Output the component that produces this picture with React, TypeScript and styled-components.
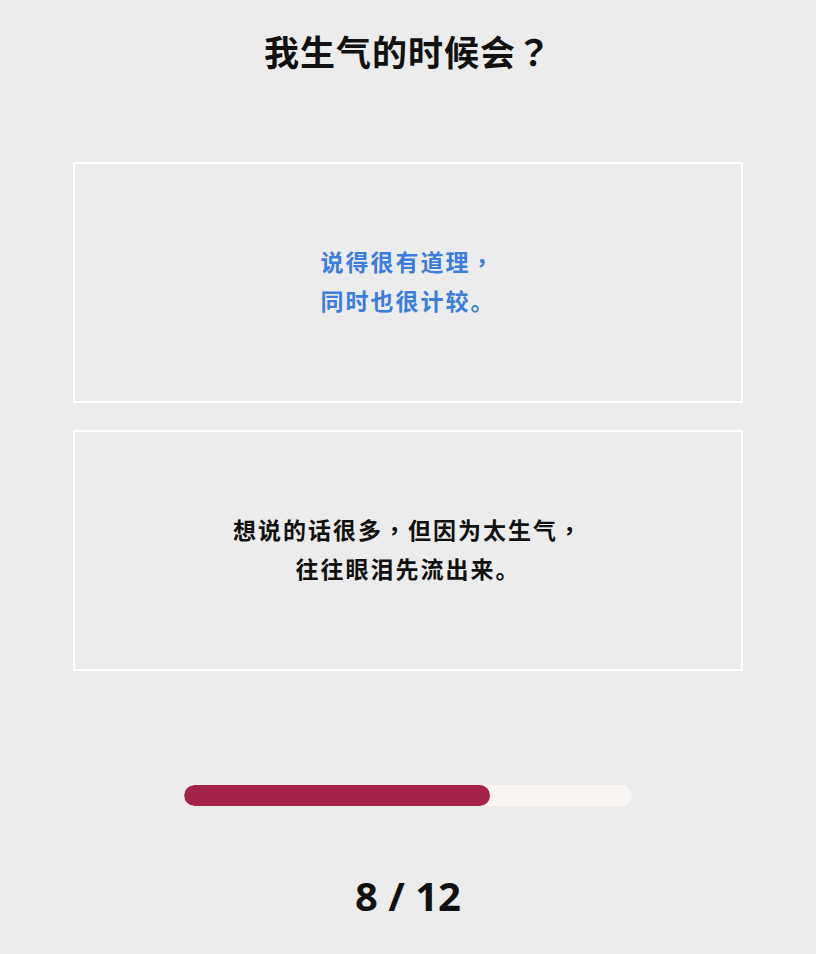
import React from "react";
import styled, { createGlobalStyle } from "styled-components";

const Global = createGlobalStyle`
  html, body { margin: 0; padding: 0; background: #ececec; }
  body {
    font-family: "Noto Sans CJK SC", "Noto Sans", sans-serif;
    text-spacing-trim: space-all;
  }
`;

const Page = styled.div`
  width: 816px;
  height: 954px;
  background: #ececec;
  display: flex;
  flex-direction: column;
  align-items: center;
  box-sizing: border-box;
  padding-top: 26px;
`;

const Title = styled.h1`
  margin: 0;
  font-size: 35px;
  line-height: 50px;
  font-weight: 700;
  color: #111;
  letter-spacing: 1px;
  text-spacing-trim: space-all;
`;

const Options = styled.div`
  margin-top: 86px;
  display: flex;
  flex-direction: column;
  gap: 27px;
  width: 670px;
`;

const Card = styled.button<{ $active?: boolean }>`
  box-sizing: border-box;
  height: 241px;
  width: 100%;
  border: 2px solid #ffffff;
  background: transparent;
  display: flex;
  align-items: center;
  justify-content: center;
  text-align: center;
  font-family: inherit;
  font-size: 23px;
  line-height: 39px;
  font-weight: 700;
  letter-spacing: 2px;
  text-spacing-trim: space-all;
  color: ${(p) => (p.$active ? "#3b7ddd" : "#111")};
  cursor: pointer;
  padding: 0 0 4px 0;
`;

const Punct = styled.span`
  font-family: "Noto Sans CJK TC", "Noto Sans CJK SC", sans-serif;
`;

const Progress = styled.div`
  margin-top: 114px;
  width: 448px;
  height: 21px;
  border-radius: 11px;
  background: #f8f5f2;
  overflow: hidden;
`;

const Fill = styled.div`
  height: 100%;
  border-radius: 11px;
  background: #a52348;
`;

const Counter = styled.div`
  margin-top: 63px;
  font-family: "Open Sans", "Noto Sans", sans-serif;
  font-size: 40px;
  font-weight: 700;
  line-height: 54px;
  color: #111;
`;

export default function App() {
  const current = 8;
  const total = 12;
  return (
    <>
      <Global />
      <Page>
        <Title>
          我生气的时候会<Punct>？</Punct>
        </Title>
        <Options>
          <Card $active>
            <span>
              说得很有道理<Punct>，</Punct>
              <br />
              同时也很计较。
            </span>
          </Card>
          <Card>
            <span>
              想说的话很多<Punct>，</Punct>但因为太生气<Punct>，</Punct>
              <br />
              往往眼泪先流出来。
            </span>
          </Card>
        </Options>
        <Progress>
          <Fill style={{ width: `${(306 / 448) * 100}%` }} />
        </Progress>
        <Counter>
          {current} / {total}
        </Counter>
      </Page>
    </>
  );
}
